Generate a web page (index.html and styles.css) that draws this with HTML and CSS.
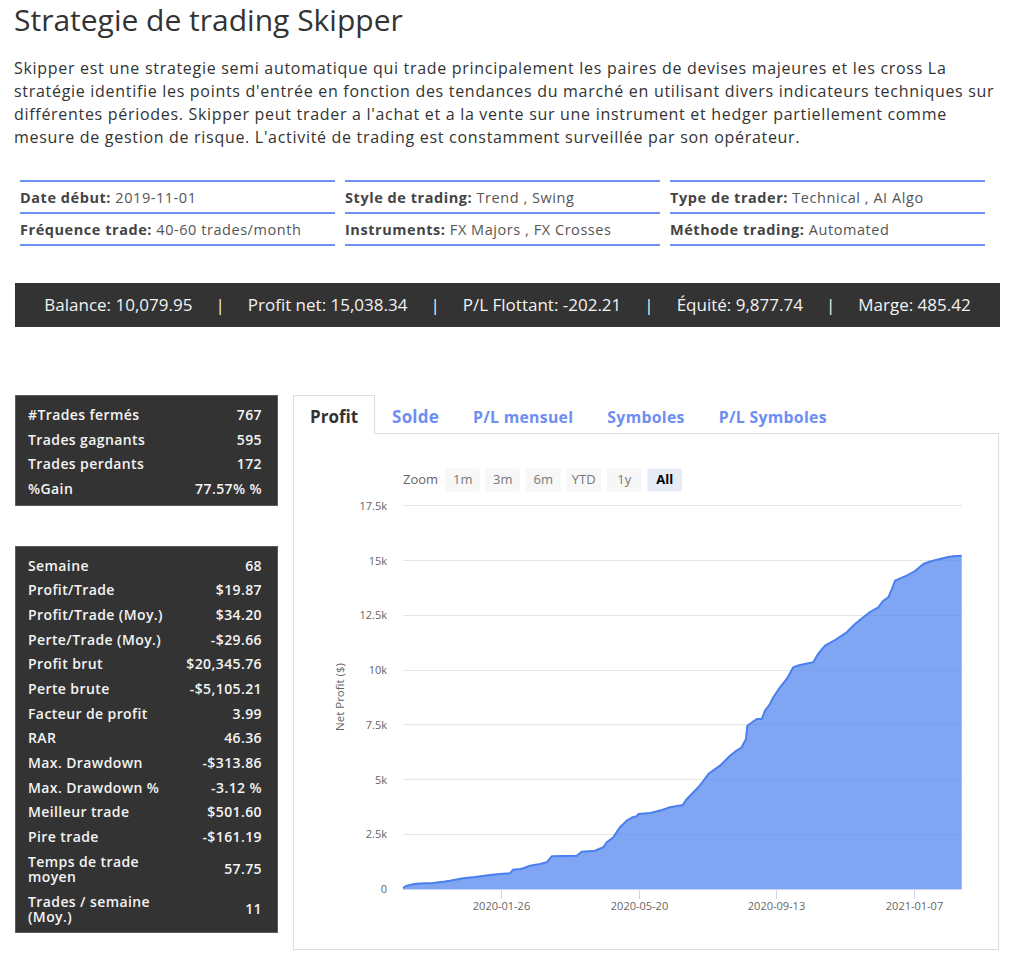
FILE: index.html
```html
<!DOCTYPE html>
<html lang="fr">
<head>
<meta charset="utf-8">
<title>Strategie de trading Skipper</title>
<link rel="stylesheet" href="styles.css">
</head>
<body>
<div class="page">
  <h1 class="title">Strategie de trading Skipper</h1>
  <p class="desc">Skipper est une strategie semi automatique qui trade principalement les paires de devises majeures et les cross La stratégie identifie les points d'entrée en fonction des tendances du marché en utilisant divers indicateurs techniques sur différentes périodes. Skipper peut trader a l'achat et a la vente sur une instrument et hedger partiellement comme mesure de gestion de risque. L'activité de trading est constamment surveillée par son opérateur.</p>

  <div class="info">
    <div class="info-col">
      <div class="info-row"><span class="lbl">Date début:</span> 2019-11-01</div>
      <div class="info-row"><span class="lbl">Fréquence trade:</span> 40-60 trades/month</div>
    </div>
    <div class="info-col">
      <div class="info-row"><span class="lbl">Style de trading:</span> Trend , Swing</div>
      <div class="info-row"><span class="lbl">Instruments:</span> FX Majors , FX Crosses</div>
    </div>
    <div class="info-col">
      <div class="info-row"><span class="lbl">Type de trader:</span> Technical , AI Algo</div>
      <div class="info-row"><span class="lbl">Méthode trading:</span> Automated</div>
    </div>
  </div>

  <div class="summary">Balance: 10,079.95<span class="sep">|</span>Profit net: 15,038.34<span class="sep">|</span>P/L Flottant: -202.21<span class="sep">|</span>Équité: 9,877.74<span class="sep">|</span>Marge: 485.42</div>

  <div class="main">
    <div class="side">
      <div class="stats">
        <div class="k">#Trades fermés</div><div class="v">767</div>
        <div class="k">Trades gagnants</div><div class="v">595</div>
        <div class="k">Trades perdants</div><div class="v">172</div>
        <div class="k">%Gain</div><div class="v">77.57% %</div>
      </div>
      <div class="stats stats-2">
        <div class="k">Semaine</div><div class="v">68</div>
        <div class="k">Profit/Trade</div><div class="v">$19.87</div>
        <div class="k">Profit/Trade (Moy.)</div><div class="v">$34.20</div>
        <div class="k">Perte/Trade (Moy.)</div><div class="v">-$29.66</div>
        <div class="k">Profit brut</div><div class="v">$20,345.76</div>
        <div class="k">Perte brute</div><div class="v">-$5,105.21</div>
        <div class="k">Facteur de profit</div><div class="v">3.99</div>
        <div class="k">RAR</div><div class="v">46.36</div>
        <div class="k">Max. Drawdown</div><div class="v">-$313.86</div>
        <div class="k">Max. Drawdown %</div><div class="v">-3.12 %</div>
        <div class="k">Meilleur trade</div><div class="v">$501.60</div>
        <div class="k">Pire trade</div><div class="v">-$161.19</div>
        <div class="k">Temps de trade moyen</div><div class="v">57.75</div>
        <div class="k">Trades / semaine (Moy.)</div><div class="v">11</div>
      </div>
    </div>

    <div class="panel">
      <ul class="tabs">
        <li class="tab tab-active">Profit</li>
        <li class="tab tab-big">Solde</li>
        <li class="tab">P/L mensuel</li>
        <li class="tab">Symboles</li>
        <li class="tab">P/L Symboles</li>
      </ul>
      <div class="tab-body">
        <svg class="chart" width="704" height="515" viewBox="294 435 704 515" xmlns="http://www.w3.org/2000/svg">
          <!-- range selector -->
          <text class="zoom-lbl" x="403" y="485">Zoom</text>
          <g class="btn"><rect x="445.5" y="469.5" width="34.5" height="23" rx="2"/><text x="462.7" y="485">1m</text></g>
          <g class="btn"><rect x="485.5" y="469.5" width="34.5" height="23" rx="2"/><text x="502.7" y="485">3m</text></g>
          <g class="btn"><rect x="526" y="469.5" width="34.5" height="23" rx="2"/><text x="543.2" y="485">6m</text></g>
          <g class="btn"><rect x="566.5" y="469.5" width="34.5" height="23" rx="2"/><text x="583.7" y="485">YTD</text></g>
          <g class="btn"><rect x="607" y="469.5" width="34.5" height="23" rx="2"/><text x="624.2" y="485">1y</text></g>
          <g class="btn btn-on"><rect x="647.5" y="469.5" width="34.5" height="23" rx="2"/><text x="664.7" y="485">All</text></g>

          <!-- grid -->
          <g class="grid">
            <line x1="403" y1="835.5" x2="962" y2="835.5"/>
            <line x1="403" y1="780.5" x2="962" y2="780.5"/>
            <line x1="403" y1="725.5" x2="962" y2="725.5"/>
            <line x1="403" y1="671.5" x2="962" y2="671.5"/>
            <line x1="403" y1="616.5" x2="962" y2="616.5"/>
            <line x1="403" y1="561.5" x2="962" y2="561.5"/>
            <line x1="403" y1="506.5" x2="962" y2="506.5"/>
          </g>
          <g class="ylab">
            <text x="387" y="894">0</text>
            <text x="387" y="839">2.5k</text>
            <text x="387" y="784.5">5k</text>
            <text x="387" y="729.5">7.5k</text>
            <text x="387" y="675">10k</text>
            <text x="387" y="620">12.5k</text>
            <text x="387" y="565.5">15k</text>
            <text x="387" y="510.5">17.5k</text>
          </g>
          <text class="ytitle" transform="translate(344 698) rotate(-90)">Net Profit ($)</text>

          <!-- series -->
          <path class="area" d="M403,890 L403,889 406,887 413,885.3 420,884.5 433,884 445,882.5 450,881.7 463,879.3 475,878 490,876 500,875 510,874.3 513,870.7 520,870 523.3,869.3 530,866.7 540,865 546.7,863.3 551.7,857.3 565,857 576.7,856.7 581.7,852.7 595,851.7 603.3,848.3 606.7,843.3 613.3,838.3 618,831 620,828.3 626.7,821.7 632,818.5 636.7,817.3 638.3,815 650,814 653.3,813.3 662,811 670,808.3 682.7,806 686,801 690,796.7 698.3,788.3 704,781 708.3,775 715,770 720,766.7 730,756.7 736,752 741.7,748.3 746,740 747.3,726.7 756.7,720 761.7,720 765,711.7 770,705 773.3,698.3 780,688.3 786.7,680 793.3,668.3 800,666 813.3,663.3 818,655 825,646.7 835,641 846.7,633.3 855,625 863.3,618.3 870,613 878.3,608.3 883,602 888.3,598.3 892,590 895,581.7 906.7,576.7 915,572 923.3,565 930,562.5 940,560 948,558 953.3,557.3 961.7,556.7 L961.7,890 Z"/>
          <path class="line" d="M403,889 406,887 413,885.3 420,884.5 433,884 445,882.5 450,881.7 463,879.3 475,878 490,876 500,875 510,874.3 513,870.7 520,870 523.3,869.3 530,866.7 540,865 546.7,863.3 551.7,857.3 565,857 576.7,856.7 581.7,852.7 595,851.7 603.3,848.3 606.7,843.3 613.3,838.3 618,831 620,828.3 626.7,821.7 632,818.5 636.7,817.3 638.3,815 650,814 653.3,813.3 662,811 670,808.3 682.7,806 686,801 690,796.7 698.3,788.3 704,781 708.3,775 715,770 720,766.7 730,756.7 736,752 741.7,748.3 746,740 747.3,726.7 756.7,720 761.7,720 765,711.7 770,705 773.3,698.3 780,688.3 786.7,680 793.3,668.3 800,666 813.3,663.3 818,655 825,646.7 835,641 846.7,633.3 855,625 863.3,618.3 870,613 878.3,608.3 883,602 888.3,598.3 892,590 895,581.7 906.7,576.7 915,572 923.3,565 930,562.5 940,560 948,558 953.3,557.3 961.7,556.7"/>

          <!-- x axis -->
          <line class="xaxis" x1="403" y1="890.5" x2="962" y2="890.5"/>
          <g class="ticks">
            <line x1="501.5" y1="890" x2="501.5" y2="900"/>
            <line x1="639.5" y1="890" x2="639.5" y2="900"/>
            <line x1="776.5" y1="890" x2="776.5" y2="900"/>
            <line x1="914.5" y1="890" x2="914.5" y2="900"/>
          </g>
          <g class="xlab">
            <text x="501.5" y="911">2020-01-26</text>
            <text x="639.5" y="911">2020-05-20</text>
            <text x="776.5" y="911">2020-09-13</text>
            <text x="914.5" y="911">2021-01-07</text>
          </g>
        </svg>
      </div>
    </div>
  </div>
</div>
</body>
</html>
```

FILE: styles.css
```css
* { box-sizing: border-box; }

body {
  margin: 0;
  background: #fff;
  color: #333;
  font-family: "Open Sans", "DejaVu Sans", sans-serif;
}

.page {
  width: 1000px;
  padding-left: 14px;
}

.title {
  margin: 3px 0 0;
  font-size: 30px;
  font-weight: 400;
  line-height: 33px;
  color: #333;
}

.desc {
  margin: 21px 0 0;
  width: 986px;
  font-size: 16px;
  line-height: 23px;
  letter-spacing: 0.7px;
  color: #333;
}

/* info grid */
.info {
  display: grid;
  grid-template-columns: repeat(3, 315px);
  column-gap: 10px;
  margin: 31px 0 0 6px;
}

.info-col {
  border-top: 2px solid #6b93ef;
}

.info-row {
  height: 32px;
  line-height: 31px;
  border-bottom: 2px solid #6b93ef;
  font-size: 14.5px;
  letter-spacing: 0.55px;
  color: #555;
  white-space: nowrap;
}

.lbl {
  font-weight: 700;
  color: #444;
}

/* summary bar */
.summary {
  margin: 37px 0 0 1px;
  width: 985px;
  height: 44px;
  line-height: 44px;
  background: #333;
  color: #f2f2f2;
  font-size: 17px;
  text-align: center;
  white-space: nowrap;
}

.sep {
  display: inline-block;
  margin: 0 23px;
}

/* main area */
.main {
  display: flex;
  align-items: flex-start;
  gap: 15px;
  margin: 68px 0 0 1px;
  width: 984px;
}

.side {
  flex: none;
  width: 263px;
}

.stats {
  display: grid;
  grid-template-columns: 150px 1fr;
  align-items: center;
  padding: 6px 15px 4px 12px;
  background: #333;
  border: 1px solid #5c5c5c;
  color: #f4f4f4;
  font-size: 14px;
  font-weight: 600;
  letter-spacing: 0.4px;
}

.stats-2 {
  margin-top: 40px;
}

.k, .v {
  padding: 4.85px 0;
  line-height: 15px;
}

.v {
  text-align: right;
  white-space: nowrap;
}

/* tabs panel */
.panel {
  flex: 1;
  min-width: 0;
}

.tabs {
  display: flex;
  margin: 0;
  padding: 0;
  list-style: none;
  border-bottom: 1px solid #ddd;
}

.tab {
  margin-bottom: -1px;
  padding: 4px 16px 0;
  height: 39px;
  line-height: 34px;
  border: 1px solid transparent;
  border-bottom: none;
  font-size: 15.8px;
  font-weight: 700;
  letter-spacing: 0.3px;
  color: #6d8ef2;
}

.tab-big {
  font-size: 17px;
  letter-spacing: 0.2px;
}

.tab-active {
  border-color: #ddd;
  background: #fff;
  color: #333;
  font-size: 17px;
  letter-spacing: 0;
}

.tab-body {
  height: 516px;
  border: 1px solid #ddd;
  border-top: none;
}

.chart {
  display: block;
  font-family: "Open Sans", "DejaVu Sans", sans-serif;
}

.zoom-lbl {
  font-size: 13px;
  fill: #666;
}

.btn rect {
  fill: #f7f7f7;
}

.btn text {
  font-size: 13px;
  fill: #777;
  text-anchor: middle;
}

.btn-on rect {
  fill: #e6ebf5;
}

.btn-on text {
  fill: #000;
  font-weight: 700;
}

.grid line {
  stroke: #e6e6e6;
  stroke-width: 1;
}

.ylab text {
  font-size: 11px;
  fill: #666;
  text-anchor: end;
}

.ytitle {
  font-size: 11.5px;
  fill: #666;
  text-anchor: middle;
}

.area {
  fill: #4d82ee;
  fill-opacity: 0.72;
}

.line {
  fill: none;
  stroke: #4a80ee;
  stroke-width: 2;
  stroke-linejoin: round;
}

.xaxis, .ticks line {
  stroke: #ccd6eb;
  stroke-width: 1;
}

.xlab text {
  font-size: 11px;
  fill: #666;
  text-anchor: middle;
}
```
